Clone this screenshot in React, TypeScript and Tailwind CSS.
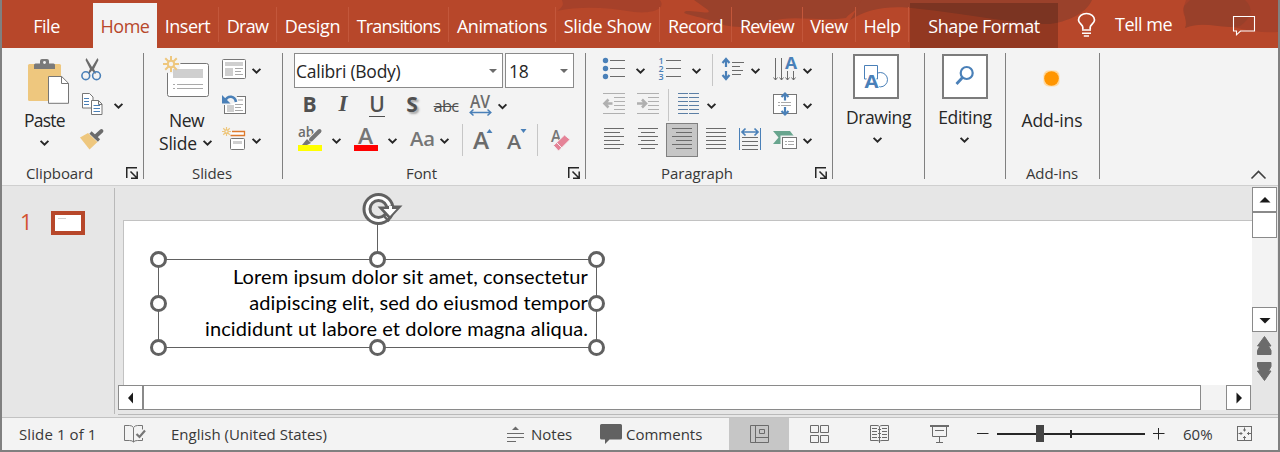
import React from "react";

type ArtProps = {
  x: number;
  y: number;
  w: number;
  h: number;
  className?: string;
  children?: React.ReactNode;
};

const BLUE = "#4a80b8";
const GRAY = "#6b6b6b";
const GOLD = "#eec77e";

/* A drawing whose coordinates are those of the window. */
function Art({ x, y, w, h, className = "", children }: ArtProps) {
  return (
    <svg
      width={w}
      height={h}
      viewBox={`${x} ${y} ${w} ${h}`}
      className={`block shrink-0 overflow-visible ${className}`}
      fill="none"
    >
      {children}
    </svg>
  );
}

function Chevron({ x, y }: { x: number; y: number }) {
  return <path d={`M${x + 0.6} ${y + 0.8}l3.9 3.9 3.9-3.9`} stroke="#262626" strokeWidth="1.9" />;
}

function Lines({ rows, color = GRAY }: { rows: [number, number, number][]; color?: string }) {
  return (
    <>
      {rows.map(([x, y, w], i) => (
        <rect key={i} x={x} y={y} width={w} height="1" fill={color} />
      ))}
    </>
  );
}

function Star({ x, y, r, inner, sw }: { x: number; y: number; r: number; inner: number; sw: number }) {
  const d = r * 0.72;
  return (
    <g stroke={GOLD} strokeWidth={sw}>
      <path
        d={`M${x - r} ${y}H${x + r}M${x} ${y - r}V${y + r}M${x - d} ${y - d}L${x + d} ${y + d}M${x + d} ${y - d}L${x - d} ${y + d}`}
      />
      <circle cx={x} cy={y} r={inner} fill="#f3f3f3" />
    </g>
  );
}

function Launcher({ x }: { x: number }) {
  return (
    <Art x={x} y={167} w={13} h={13}>
      <path
        d={`M${x + 0.75} 178V167.75H${x + 11}M${x + 4.5} 171.5l6.5 6.5M${x + 11.2} 171.5V178.2H${x + 5}`}
        stroke="#262626"
        strokeWidth="1.5"
      />
    </Art>
  );
}

function Group({ className, children }: { className: string; children: React.ReactNode }) {
  return (
    <section className={`flex h-[126px] shrink-0 flex-col border-r border-[#808080] ${className}`}>
      {children}
    </section>
  );
}

function Row({ children, className = "" }: { children: React.ReactNode; className?: string }) {
  return <div className={`flex h-[35px] shrink-0 ${className}`}>{children}</div>;
}

function Tab({ label, className }: { label: string; className: string }) {
  return (
    <div className={`flex shrink-0 items-center justify-center ${className}`}>
      <span className="whitespace-nowrap">{label}</span>
    </div>
  );
}

function Divider() {
  return <div className="mt-1 h-[35px] w-px shrink-0 bg-[#c3573b]" />;
}

function Header() {
  return (
    <header className="relative flex h-12 shrink-0 bg-[#b7472a] pt-[3px] text-[18px] leading-6 tracking-[-0.5px] text-white">
      <Art x={2} y={0} w={1276} h={48} className="absolute left-0 top-0">
        <path d="M557 11C566 5 562 2 562 0H660C666 8 655 14 634 12 605 7 580 6 557 11Z" fill="#a6412a" />
        <path d="M694 0H862C866 6 850 12 846 18 820 22 790 14 770 22 745 30 725 27 716 22 690 14 680 14 686 11 700 11 712 15 708 10Z" fill="#9a412b" />
        <path d="M850 20C858 8 860 0 862 0H1092C1086 14 1066 22 1050 24 1010 24 970 14 920 9 890 5 870 8 850 20Z" fill="#9a412b" />
        <path d="M1185 28C1190 20 1180 14 1184 6L1186 0H1278V32C1250 34 1235 25 1210 24 1198 24 1190 25 1185 28Z" fill="#a6412a" />
        <path d="M1185 28C1188 22 1183 14 1184 6L1190 0H1245C1254 8 1252 18 1240 26 1220 30 1205 20 1185 28Z" fill="#99402a" />
      </Art>
      <div className="relative flex h-[45px]">
        <Tab label="File" className="w-[91px] pr-0.5" />
        <Tab label="Home" className="w-16 bg-[#f3f3f3] text-[#b7472a]" />
        <Tab label="Insert" className="w-[61px]" />
        <Divider />
        <Tab label="Draw" className="w-[57px] tracking-[-0.7px]" />
        <Divider />
        <Tab label="Design" className="w-[71px] tracking-[-0.3px]" />
        <Divider />
        <Tab label="Transitions" className="w-[99px] tracking-[-0.85px]" />
        <Divider />
        <Tab label="Animations" className="w-[106px]" />
        <Divider />
        <Tab label="Slide Show" className="w-[103px] tracking-[-0.3px]" />
        <Divider />
        <Tab label="Record" className="w-[71px] tracking-[-0.7px]" />
        <Divider />
        <Tab label="Review" className="w-[70px] tracking-[-0.8px]" />
        <Divider />
        <Tab label="View" className="w-[52px] tracking-[-0.4px]" />
        <Divider />
        <Tab label="Help" className="w-[52px]" />
        <Divider />
        <Tab label="Shape Format" className="ml-px w-[148px] bg-black/20" />
        <Art x={1058} y={3} w={48} h={45}>
          <path
            d="M1083 27v-1.500c0-2.500-4.300-3.600-4.300-6.800a7.800 5.700 0 0 1 0 0a7.800 5.700 0 0 1 15.600 0c0 3.200-4.300 4.300-4.300 6.800v3.500"
            className="hidden"
          />
          <path
            d="M1082.800 29.500v-2.200c0-2.600-4.300-3.800-4.300-7.300a8 6.500 0 0 1 16 0c0 3.500-4.300 4.700-4.300 7.300v2.200"
            stroke="white"
            strokeWidth="1.700"
          />
          <path d="M1082 30h9M1082 33.200h9M1083.800 36h5.200" stroke="white" strokeWidth="1.600" />
        </Art>
        <span className="ml-[9px] mt-[9px] tracking-[-0.5px]">Tell me</span>
      </div>
      <Art x={1232} y={15} w={25} h={22} className="relative ml-auto mr-[21px] mt-3">
        <path d="M1233.5 16.500h21v14.500h-14l-4 3.800v-3.800h-3z" stroke="white" strokeWidth="1.100" />
      </Art>
    </header>
  );
}

function Clipboard() {
  return (
    <Group className="w-[142px]">
      <div className="flex h-[110px] shrink-0">
        <div className="flex w-[78px] flex-col">
          <Art x={2} y={53} w={78} h={55}>
            <rect x="28" y="64" width="33" height="37" rx="1.500" fill={GOLD} />
            <path d="M34 69V65q0-1.500 1.500-1.500H40V61q0-2 2-2h5q2 0 2 2v2.500h4.500q1.500 0 1.500 1.500v4z" fill="#7a7a7a" />
            <circle cx="44.500" cy="62.500" r="1.400" fill="#f3f3f3" />
            <path d="M48.500 76.500h13.200l6.800 6.800v20h-20z" fill="white" stroke="#767676" />
            <path d="M61.500 76.500v7h7" stroke="#767676" />
          </Art>
          <div className="flex h-6 items-center pl-[22px] text-[17.500px] tracking-[-0.8px] text-[#262626]">Paste</div>
          <Art x={2} y={132} w={78} h={26}>
            <Chevron x={40} y={140} />
          </Art>
        </div>
        <div>
          <Row>
            <Art x={80} y={53} w={63} h={35}>
              <path d="M86.500 58l-1 2 4.500 9-2 4 1 1 3-3.500 3 3.500 1-1-2-4 4.500-9-1-2-5.500 9z" fill="#6b6b6b" />
              <circle cx="85.800" cy="75.700" r="3.900" stroke={BLUE} strokeWidth="1.600" />
              <circle cx="96.500" cy="75.700" r="3.900" stroke={BLUE} strokeWidth="1.600" />
            </Art>
          </Row>
          <Row>
            <Art x={80} y={88} w={63} h={35}>
              <path d="M82.500 93.500h7l3.500 3.500v11h-10.500z" fill="white" stroke="#767676" />
              <path d="M84 98.500h5M84 101.500h5M84 104.500h5" stroke={BLUE} />
              <path d="M91.500 100.500h7l3.500 3.500v10.500h-10.500zM98.500 100.500v4h3.500" fill="white" stroke="#767676" />
              <path d="M93.500 105.500h6.500M93.500 108.500h6.500M93.500 111.500h6.500" stroke={BLUE} />
              <Chevron x={114} y={103} />
            </Art>
          </Row>
          <Row>
            <Art x={80} y={123} w={63} h={35}>
              <path d="M80 137.500l8-4.500 9.500 9-8 7.500z" fill={GOLD} />
              <path d="M90.500 132.500l8.500 8" stroke="#6b6b6b" strokeWidth="3.200" />
              <path d="M95.500 136.500l6-5.500" stroke="#6b6b6b" strokeWidth="3.800" strokeLinecap="round" />
            </Art>
          </Row>
        </div>
      </div>
      <div className="flex h-5 shrink-0 items-center pl-6">
        <span className="w-[100px]">Clipboard</span>
        <Launcher x={126} />
      </div>
    </Group>
  );
}

function Slides() {
  return (
    <Group className="w-[139px]">
      <div className="flex h-[110px] shrink-0">
        <div className="flex w-[76px] flex-col">
          <Art x={144} y={53} w={76} h={55}>
            <rect x="167.500" y="63.500" width="41" height="33" rx="2" fill="white" stroke="#767676" />
            <circle cx="171" cy="64" r="9.500" fill="#f3f3f3" />
            <rect x="173" y="69" width="30" height="9" fill="#cfcfcf" />
            <Lines color="#a9a9a9" rows={[[173, 84, 2], [177, 84, 26], [173, 88, 2], [177, 88, 26]]} />
            <Star x={171} y={64} r={8} inner={3.2} sw={2} />
          </Art>
          <div className="h-[23px] pl-[25px] text-[17.500px] leading-6 tracking-[-0.5px] text-[#262626]">New</div>
          <div className="flex h-6 pl-[15px] text-[17.500px] leading-6 text-[#262626]">
            <span className="w-11 tracking-[-0.2px]">Slide</span>
            <Art x={203} y={131} w={14} h={24}>
              <Chevron x={203} y={140} />
            </Art>
          </div>
        </div>
        <div>
          <Row>
            <Art x={220} y={53} w={62} h={35}>
              <rect x="222.500" y="59.500" width="23" height="19" rx="1" fill="white" stroke="#767676" />
              <rect x="225" y="62" width="18" height="4" fill="#cfcfcf" />
              <rect x="225" y="68" width="8" height="8" fill="#cfcfcf" />
              <Lines color="#a9a9a9" rows={[[235, 68, 8], [235, 71, 6], [235, 74, 8]]} />
              <Chevron x={252} y={68} />
            </Art>
          </Row>
          <Row>
            <Art x={220} y={88} w={62} h={35}>
              <rect x="224.500" y="96.500" width="21" height="17" fill="white" stroke="#767676" />
              <path d="M221 93h15l2 8-8 4h-9z" fill="#f3f3f3" />
              <rect x="238" y="99" width="5" height="2" fill="#cfcfcf" />
              <rect x="227" y="105" width="7" height="7" fill="#cfcfcf" />
              <Lines color="#a9a9a9" rows={[[235, 104, 8], [235, 107, 6], [235, 110, 8]]} />
              <path d="M236 102c-1-6-8-7.500-11-1" stroke={BLUE} strokeWidth="2.600" />
              <path d="M222 95v8.500h8.500z" fill={BLUE} />
            </Art>
          </Row>
          <Row>
            <Art x={220} y={123} w={62} h={35}>
              <path d="M232 131.500h12.500v4h-14" fill="white" stroke="#dd7a2e" strokeWidth="1.300" />
              <Star x={226.5} y={131.5} r={4.5} inner={1.6} sw={1.2} />
              <rect x="230.500" y="138.500" width="14" height="11" rx="1" fill="white" stroke="#767676" />
              <rect x="233" y="141" width="9" height="3" fill="#cfcfcf" />
              <Chevron x={252} y={138} />
            </Art>
          </Row>
        </div>
      </div>
      <div className="flex h-5 shrink-0 items-center pl-12">Slides</div>
    </Group>
  );
}

function FontGroup() {
  return (
    <Group className="w-[303px]">
      <Row className="pl-[11px] text-[17.500px] tracking-[-0.25px] text-[#262626]">
        <div className="flex w-[209px] items-center border border-[#8a8a8a] bg-white pl-px">
          <span className="w-[193px] pt-0.5">Calibri (Body)</span>
          <svg width="8" height="4" viewBox="0 0 8 4" className="shrink-0">
            <path d="M0 0h8L4 4z" fill="#6b6b6b" />
          </svg>
        </div>
        <div className="ml-0.5 flex w-[69px] items-center border border-[#8a8a8a] bg-white pl-[3px]">
          <span className="w-[51px] pt-0.5">18</span>
          <svg width="8" height="4" viewBox="0 0 8 4" className="shrink-0">
            <path d="M0 0h8L4 4z" fill="#6b6b6b" />
          </svg>
        </div>
      </Row>
      <Row className="items-center pb-[3px] pl-[9px] text-center text-[21px] leading-[32px] text-[#505050]">
        <b className="w-[35px]">B</b>
        <i className="w-8 text-[23px] font-bold [font-family:'Liberation_Serif',serif]">I</i>
        <span className="flex w-9 justify-center">
          <span className="mt-px h-[25px] border-b border-[#505050] font-semibold leading-[24px]">U</span>
        </span>
        <b className="w-[34px] [text-shadow:2px_2px_2px_#aaa]">S</b>
        <span className="w-[34px] pt-[3px] text-[16.500px] tracking-[-0.8px] line-through decoration-1">abc</span>
        <Art x={463} y={86} w={50} h={35}>
          <text x="470" y="107" fontSize="17.500" fontWeight="600" fill="#6b6b6b" textLength="20" lengthAdjust="spacingAndGlyphs">AV</text>
          <path d="M471 111.500h19M473.500 108.500l-3.300 3 3.300 3M487.500 108.500l3.300 3-3.300 3" stroke={BLUE} strokeWidth="1.500" />
          <Chevron x={498} y={102.5} />
        </Art>
      </Row>
      <Row>
        <Art x={283} y={123} w={66} h={35}>
          <text x="298" y="137" fontSize="13.500" fontWeight="600" fill="#6b6b6b" textLength="16" lengthAdjust="spacingAndGlyphs">ab</text>
          <path d="M320 131l-11 10" stroke="#f3f3f3" strokeWidth="6" />
          <path d="M319.500 131l-8.500 8.500" stroke="#767676" strokeWidth="4" strokeLinecap="round" />
          <path d="M307 139l4 4-4 2h-5z" fill="#767676" />
          <rect x="298" y="145" width="24" height="6" fill="#ffff00" />
          <Chevron x={332} y={138} />
        </Art>
        <Art x={349} y={123} w={54} h={35}>
          <text x="358" y="144" fontSize="21.500" fontWeight="600" fill="#767676" textLength="15" lengthAdjust="spacingAndGlyphs">A</text>
          <rect x="354" y="145" width="24" height="6" fill="#ff0000" />
          <Chevron x={388} y={138} />
        </Art>
        <Art x={403} y={123} w={59} h={35}>
          <text x="410" y="146" fontSize="20" fontWeight="600" fill="#767676" textLength="25" lengthAdjust="spacingAndGlyphs">Aa</text>
          <Chevron x={440} y={138} />
        </Art>
        <div className="mt-px h-8 w-px bg-[#c6c6c6]" />
        <Art x={463} y={123} w={74} h={35}>
          <text x="473" y="149" fontSize="23" fontWeight="600" fill="#6b6b6b" textLength="16" lengthAdjust="spacingAndGlyphs">A</text>
          <path d="M486.500 133h6l-3-4z" fill={BLUE} />
          <text x="507" y="149" fontSize="19" fontWeight="600" fill="#6b6b6b" textLength="14" lengthAdjust="spacingAndGlyphs">A</text>
          <path d="M520.500 129h6l-3 4z" fill={BLUE} />
        </Art>
        <div className="mt-px h-8 w-px bg-[#c6c6c6]" />
        <Art x={538} y={123} w={40} h={35}>
          <text x="551" y="142" fontSize="17" fontWeight="600" fill="#767676" textLength="10" lengthAdjust="spacingAndGlyphs">A</text>
          <path d="M553.500 145.500l11-10.500 5.500 4.500-11.500 11.500z" fill="#e58397" stroke="#f3f3f3" />
          <path d="M556.500 142.500l5.500 5.500" stroke="#f3f3f3" />
        </Art>
      </Row>
      <div className="mt-[5px] flex h-5 shrink-0 items-center pl-[123px]">
        <span className="w-[162px]">Font</span>
        <Launcher x={568} />
      </div>
    </Group>
  );
}

function Paragraph() {
  const six = [128, 132, 136, 140, 144, 148];
  return (
    <Group className="w-[247px]">
      <Row>
        <Art x={586} y={53} w={126} h={35}>
          {[60.5, 68.5, 76.5].map((y) => (
            <circle key={y} cx="605.500" cy={y} r="2.700" fill={BLUE} />
          ))}
          <Lines rows={[[610, 60, 15], [610, 68, 15], [610, 76, 15], [666, 60, 15], [666, 68, 15], [666, 76, 15]]} />
          <Chevron x={636} y={68} />
          <text x="658.500" y="64" fontSize="9" fontWeight="600" fill={BLUE}>1</text>
          <text x="658.500" y="72" fontSize="9" fontWeight="600" fill={BLUE}>2</text>
          <text x="658.500" y="80" fontSize="9" fontWeight="600" fill={BLUE}>3</text>
          <Chevron x={692} y={68} />
        </Art>
        <div className="mt-px h-8 w-px bg-[#c6c6c6]" />
        <Art x={713} y={53} w={119} h={35}>
          <path d="M726 59v8M722.500 63l3.500-4 3.500 4M726 71v8M722.500 75l3.500 4 3.500-4" stroke={BLUE} strokeWidth="2.200" />
          <Lines rows={[[732, 62, 12], [732, 66, 8], [732, 70, 11], [732, 74, 9]]} />
          <Chevron x={751} y={68} />
          <path d="M775.500 58v22M781.500 58v22M787.500 71v9M793.500 71v9" stroke={GRAY} />
          <path d="M773.500 77.500l2 2.500 2-2.500M779.500 77.500l2 2.500 2-2.500M785.500 77.500l2 2.500 2-2.500M791.500 77.500l2 2.500 2-2.500" stroke={GRAY} />
          <text x="785" y="69" fontSize="16" fontWeight="700" fill={BLUE} textLength="12" lengthAdjust="spacingAndGlyphs">A</text>
          <Chevron x={803} y={68} />
        </Art>
      </Row>
      <Row>
        <Art x={586} y={88} w={82} h={35}>
          <Lines
            color="#b0b0b0"
            rows={[
              [603, 93, 22], [614, 97, 11], [614, 101, 11], [614, 105, 11], [614, 109, 11], [603, 113, 22],
              [637, 93, 22], [648, 97, 11], [648, 101, 11], [648, 105, 11], [648, 109, 11], [637, 113, 22],
            ]}
          />
          <path d="M605 103.500h7.500M608.500 99.500l-4 4 4 4M637 103.500h8M642 99.500l4 4-4 4" stroke="#b0b0b0" strokeWidth="2.600" />
        </Art>
        <div className="mt-px h-8 w-px bg-[#c6c6c6]" />
        <Art x={669} y={88} w={163} h={35}>
          {[93, 97, 101, 105, 109, 113].map((y) => (
            <Lines key={y} color="#5c7fa5" rows={[[678, y, 10], [689, y, 10]]} />
          ))}
          <Chevron x={707} y={103} />
          <rect x="773.500" y="94.500" width="23" height="19" fill="white" stroke="#767676" />
          <Lines color="#a9a9a9" rows={[[778, 102, 2], [781, 102, 10], [778, 105, 2], [781, 105, 10]]} />
          <path d="M785 94v6.500M781.500 97l3.500-3.500 3.500 3.500M785 107v7M781.500 111l3.500 3.500 3.500-3.500" stroke={BLUE} strokeWidth="2.200" />
          <Chevron x={803} y={103} />
        </Art>
      </Row>
      <Row>
        <Art x={586} y={123} w={80} h={35}>
          {six.map((y, i) => (
            <Lines key={y} rows={[[604, y, i % 2 ? 16 : 20], [i % 2 ? 641 : 638, y, i % 2 ? 14 : 20]]} />
          ))}
        </Art>
        <div className="-mr-px h-[34px] border border-[#808080] bg-[#c6c6c6]">
          <Art x={667} y={124} w={30} h={32}>
            {six.map((y, i) => (
              <Lines key={y} rows={[[i % 2 ? 676 : 672, y, i % 2 ? 16 : 20]]} />
            ))}
          </Art>
        </div>
        <Art x={697} y={123} w={135} h={35}>
          {six.map((y) => (
            <Lines key={y} rows={[[706, y, 20]]} />
          ))}
          <path d="M739.500 128v22M760.500 128v22" stroke={BLUE} />
          <path d="M742.500 132h15M745.500 128.500l-3.500 3.500 3.500 3.500M754.500 128.500l3.500 3.500-3.500 3.500" stroke={BLUE} strokeWidth="1.700" />
          <Lines rows={[[742, 137, 16], [742, 141, 16], [742, 145, 16], [742, 149, 16]]} />
          <path d="M773 131h17l5 6.500-4 6.500h-18l5.500-6.500z" fill="#68a58e" />
          <rect x="780.500" y="135.500" width="18" height="16" fill="#f3f3f3" />
          <rect x="782.500" y="137.500" width="14" height="11" fill="white" stroke="#767676" />
          <Lines color="#a9a9a9" rows={[[785, 141, 2], [788, 141, 6], [785, 144, 2], [788, 144, 6]]} />
          <Chevron x={803} y={138} />
        </Art>
      </Row>
      <div className="mt-[5px] flex h-5 shrink-0 items-center pl-[75px]">
        <span className="w-[154px]">Paragraph</span>
        <Launcher x={815} />
      </div>
    </Group>
  );
}

function Ribbon() {
  return (
    <div className="flex h-[138px] shrink-0 border-b border-[#cfcfcf] bg-[#f3f3f3] pt-[5px] text-[15px] tracking-[-0.1px] text-[#383838]">
      <Clipboard />
      <Slides />
      <FontGroup />
      <Paragraph />
      <Group className="w-[92px] items-center pt-px">
        <div className="mr-1.5 border-2 border-[#7c7c7c] bg-white">
          <Art x={857} y={56} w={42} h={41}>
            <circle cx="882.300" cy="79.700" r="7.200" stroke={BLUE} />
            <path d="M866.500 79V65.500h13V79z" fill="white" stroke={BLUE} />
            <path d="M864.500 90l6-16h6l6 16z" fill="white" />
            <text x="866.500" y="88" fontSize="18" fontWeight="700" fill={BLUE} textLength="14" lengthAdjust="spacingAndGlyphs">A</text>
          </Art>
        </div>
        <span className="mt-1.5 text-[17.500px] leading-6 tracking-[-0.4px] text-[#262626]">Drawing</span>
        <Art x={873} y={136} w={9} h={8} className="mr-0.5 mt-[7px]">
          <Chevron x={873} y={137} />
        </Art>
      </Group>
      <Group className="w-[81px] items-center pt-px">
        <div className="border-2 border-[#7c7c7c] bg-white">
          <Art x={944} y={56} w={42} h={41}>
            <circle cx="966.700" cy="73" r="6" stroke={BLUE} strokeWidth="2.200" />
            <path d="M962.500 77.500l-6 6.500" stroke={BLUE} strokeWidth="2.800" />
          </Art>
        </div>
        <span className="mt-1.5 text-[17.500px] leading-6 tracking-[-0.3px] text-[#262626]">Editing</span>
        <Art x={960} y={136} w={9} h={8} className="mr-0.5 mt-[7px]">
          <Chevron x={960} y={137} />
        </Art>
      </Group>
      <Group className="w-[94px] items-center pr-px">
        <Art x={1042} y={53} w={20} h={55}>
          <rect x="1043.500" y="70.500" width="16" height="16" rx="5" fill="#ffd9a0" />
          <circle cx="1051.500" cy="78.500" r="7.300" fill="#ff9500" />
        </Art>
        <span className="h-[55px] shrink-0 text-[17.500px] leading-6 text-[#262626]">Add-ins</span>
        <span className="h-5 shrink-0 leading-5">Add-ins</span>
      </Group>
      <Art x={1250} y={170} w={18} h={11} className="ml-auto mr-[10px] mt-[117px]">
        <path d="M1251.500 178.500l7-7 7 7" stroke="#404040" strokeWidth="1.600" />
      </Art>
    </div>
  );
}

function Handle({ className }: { className: string }) {
  return <div className={`absolute size-[17px] rounded-full border-[3px] border-[#616161] bg-white ${className}`} />;
}

function TextBox() {
  return (
    <div className="absolute left-[34px] top-[38px] h-[89px] w-[439px] border border-[#616161] pr-2 pt-[3px] text-right text-[20px] leading-[26px] tracking-[0.1px] text-black [font-family:Lato,sans-serif]">
      <div className="whitespace-nowrap">
        Lorem ipsum dolor sit amet, consectetur
        <br />
        adipiscing elit, sed do eiusmod tempor
        <br />
        incididunt ut labore et dolore magna aliqua.
      </div>
      <div className="absolute -top-9 left-[218px] h-9 w-px bg-[#616161]" />
      <Art x={360} y={190} w={44} h={38} className="absolute -top-[70px] left-[201px]">
        <circle cx="378.500" cy="209" r="16" fill="#616161" />
        <circle cx="378.500" cy="209" r="11.500" stroke="white" strokeWidth="3" />
        <circle cx="378.500" cy="209" r="7" fill="#e6e6e6" />
        <path d="M377.500 206.500h8l5-1h12l-13 14z" fill="#616161" />
        <path d="M383.500 209h5.500v-3h3v3h4.500l-6.500 7z" fill="white" />
        <path d="M383 215l6 6.500" stroke="#616161" strokeWidth="2.500" />
      </Art>
      <Handle className="-left-[9px] -top-[9px]" />
      <Handle className="-top-[9px] left-[210px]" />
      <Handle className="-right-[9px] -top-[9px]" />
      <Handle className="-left-[9px] top-[35px]" />
      <Handle className="-right-[9px] top-[35px]" />
      <Handle className="-bottom-[9px] -left-[9px]" />
      <Handle className="-bottom-[9px] left-[210px]" />
      <Handle className="-bottom-[9px] -right-[9px]" />
    </div>
  );
}

function ScrollButton({ d, className }: { d: string; className: string }) {
  return (
    <div className={`flex size-[25px] shrink-0 items-center justify-center border border-[#8a8a8a] bg-white ${className}`}>
      <svg width="12" height="12" viewBox="0 0 12 12">
        <path d={d} fill="#1a1a1a" />
      </svg>
    </div>
  );
}

function Workspace() {
  return (
    <div className="flex h-[231px] shrink-0 bg-[#e6e6e6]">
      <div className="flex w-28 shrink-0 pl-[18px] pt-[21px] text-[22px] leading-7 text-[#d35230]">
        <span className="w-[31px]">1</span>
        <div className="mt-1 h-6 w-[34px] border-4 border-[#b7472a] bg-white p-[3px]">
          <div className="h-px w-2 bg-[#d0d0d0]" />
        </div>
      </div>
      <div className="mr-[3px] mt-0.5 h-[226px] w-px bg-[#b9b9b9]" />
      <div className="flex h-[229px] w-[1134px] shrink-0 flex-col border-b border-[#b9b9b9]">
        <div className="h-[34px] shrink-0" />
        <div className="relative ml-[5px] h-[165px] shrink-0 border-l border-t border-[#c2c2c2] bg-white">
          <TextBox />
        </div>
        <div className="flex h-[25px] bg-[#f3f3f3]">
          <ScrollButton d="M3 6l5-5.500v11z" className="border-r" />
          <div className="w-[1058px] shrink-0 border border-[#8a8a8a] bg-white" />
          <ScrollButton d="M9 6L3.500.5v11z" className="ml-[25px]" />
          <div className="flex-1 bg-[#e6e6e6]" />
        </div>
      </div>
      <div className="flex h-[229px] flex-1 flex-col border-b border-[#b9b9b9]">
        <div className="mt-px h-[145px] w-[25px] shrink-0 bg-[#f3f3f3]">
          <ScrollButton d="M.5 8.500L6 3l5.500 5.500z" className="" />
          <div className="h-[26px] border border-[#8a8a8a] bg-white" />
          <ScrollButton d="M.5 4h11L6 9.500z" className="mt-[69px]" />
        </div>
        <Art x={1252} y={332} w={25} h={54}>
          <path
            d="M1264.500 336.500l6.500 9.500h-2.500l2.500 4.500v4h-13.500v-4l2.500-4.500h-2.500z"
            fill="#6b6b6b"
            stroke="#6b6b6b"
            strokeLinejoin="round"
          />
          <path
            d="M1264.500 380.500l6.500-9.500h-2.500l2.500-4.500v-4h-13.500v4l2.500 4.500h-2.500z"
            fill="#6b6b6b"
            stroke="#6b6b6b"
            strokeLinejoin="round"
          />
        </Art>
      </div>
    </div>
  );
}

function StatusBar() {
  return (
    <footer className="flex h-[33px] shrink-0 items-center border-t border-[#c2c2c2] bg-[#f3f3f3] text-[15px] text-[#383838]">
      <span className="w-[121px] pl-[17px] tracking-[0.1px]">Slide 1 of 1</span>
      <Art x={123} y={418} w={48} h={32}>
        <path d="M133.500 428v14M133.500 427.500q-1.500-2-4-2h-5v15h5q3 0 4 1.500 1-1.500 4-1.500h5v-2.500M133.500 427.500q1.500-2 4-2h5v4" stroke="#767676" />
        <path d="M136.500 434l3 3 5.500-6.500" stroke="#767676" strokeWidth="2.200" />
      </Art>
      <span className="w-[335px]">English (United States)</span>
      <Art x={506} y={418} w={25} h={32}>
        <path d="M512 430h7l-3.500-3.500z" fill={GRAY} />
        <Lines rows={[[507, 433, 17], [507, 437, 17], [507, 441, 9]]} />
      </Art>
      <span className="w-[69px]">Notes</span>
      <Art x={600} y={418} w={26} h={32}>
        <path d="M601.500 424h19q1.500 0 1.500 1.500v12.500q0 1.500-1.500 1.500H609.500l-4.500 4.500v-4.500h-3.500q-1.500 0-1.500-1.500v-12.500q0-1.500 1.500-1.500z" fill="#616161" />
      </Art>
      <span className="w-[103px]">Comments</span>
      <div className="h-8 bg-[#c6c6c6]">
        <Art x={729} y={418} w={60} h={32}>
          <path d="M750.500 425.500h18v17h-18zM755.500 425.500v17M755.500 437.500h13M759.500 429.500h5v4h-5z" stroke="#6b6b6b" />
        </Art>
      </div>
      <Art x={789} y={418} w={180} h={32}>
        <path d="M810.500 425.500h8v7h-8zM820.500 425.500h8v7h-8zM810.500 435.500h8v7h-8zM820.500 435.500h8v7h-8z" stroke="#6b6b6b" />
        <path d="M879.500 427v16M879.500 426.500q-1-1-2.500-1h-6.500v15h6.500q2 0 2.500 1 .5-1 2.500-1h6.500v-15h-6.500q-1.500 0-2.500 1" stroke="#6b6b6b" />
        <Lines rows={[[872, 428, 5], [872, 431, 5], [872, 434, 5], [872, 437, 5], [882, 428, 5], [882, 431, 5], [882, 434, 5], [882, 437, 5], [878, 429, 3], [878, 433, 3], [878, 437, 3]]} />
        <rect x="930" y="425" width="19" height="2" fill="#6b6b6b" />
        <path d="M932.500 427v9.500h14V427M935 430.500h9M939.500 437v5.500M936 442.500h7" stroke="#6b6b6b" />
      </Art>
      <Art x={969} y={418} w={214} h={32}>
        <path d="M977 433.500h11.500M1153 433.500h11.500M1158.500 428v11.500" stroke="#262626" />
        <rect x="997" y="433" width="148" height="2" fill="#262626" />
        <rect x="1036" y="425" width="8" height="17" fill="#444" />
        <rect x="1070" y="430" width="2" height="8" fill="#262626" />
      </Art>
      <span className="w-[53px]">60%</span>
      <Art x={1236} y={418} w={18} h={32}>
        <rect x="1237.500" y="426.500" width="14" height="14" stroke="#6b6b6b" />
        <path d="M1244.500 427.500v4M1244.500 436v4M1238.500 433.500h4M1247 433.500h4M1243 430h3M1243 437.500h3M1241 432v3M1248.500 432v3" stroke="#6b6b6b" />
      </Art>
    </footer>
  );
}

export default function App() {
  return (
    <div className="flex h-[452px] w-[1280px] flex-col overflow-hidden whitespace-nowrap border-x-2 border-b-2 border-[#808080] [font-family:'Open_Sans','Noto_Sans',sans-serif]">
      <Header />
      <Ribbon />
      <Workspace />
      <StatusBar />
    </div>
  );
}
